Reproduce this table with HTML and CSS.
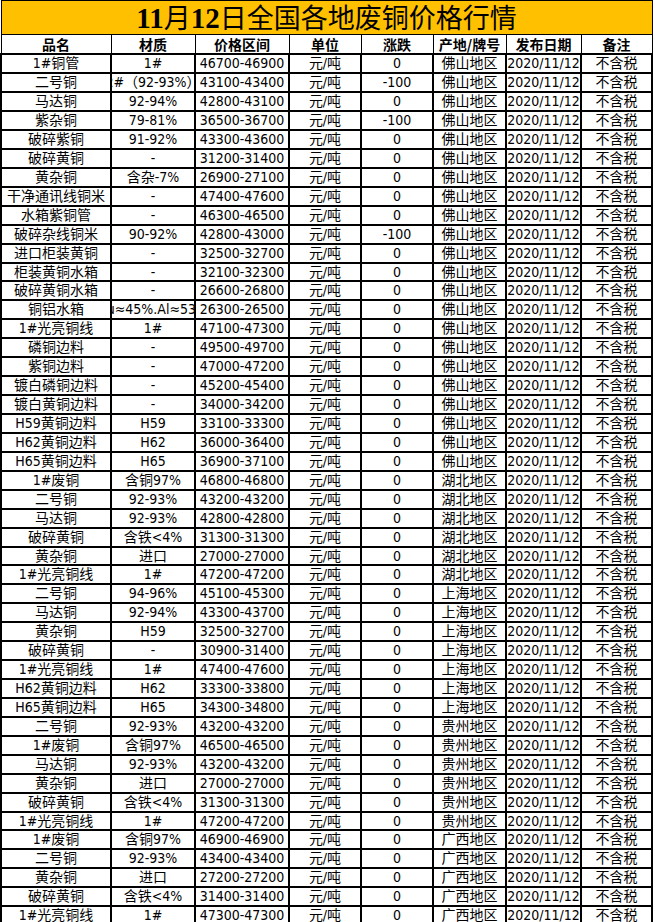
FILE: index.html
```html
<!DOCTYPE html>
<html lang="zh-CN">
<head>
<meta charset="utf-8">
<title>11月12日全国各地废铜价格行情</title>
<link rel="stylesheet" href="styles.css">
</head>
<body>
<table class="price-table">
  <colgroup>
    <col class="c-name"><col class="c-mat"><col class="c-range"><col class="c-unit">
    <col class="c-chg"><col class="c-area"><col class="c-date"><col class="c-note">
  </colgroup>
  <thead>
    <tr class="title-row"><th colspan="8"><span class="num">11</span>月<span class="num">12</span>日全国各地废铜价格行情</th></tr>
    <tr class="head-row"><th>品名</th><th>材质</th><th>价格区间</th><th>单位</th><th>涨跌</th><th>产地/牌号</th><th>发布日期</th><th>备注</th></tr>
  </thead>
  <tbody>
    <tr><td>1#铜管</td><td>1#</td><td>46700-46900</td><td>元/吨</td><td>0</td><td>佛山地区</td><td>2020/11/12</td><td>不含税</td></tr>
    <tr><td>二号铜</td><td><div class="clip"><span>2#（92-93%）</span></div></td><td>43100-43400</td><td>元/吨</td><td>-100</td><td>佛山地区</td><td>2020/11/12</td><td>不含税</td></tr>
    <tr><td>马达铜</td><td>92-94%</td><td>42800-43100</td><td>元/吨</td><td>0</td><td>佛山地区</td><td>2020/11/12</td><td>不含税</td></tr>
    <tr><td>紫杂铜</td><td>79-81%</td><td>36500-36700</td><td>元/吨</td><td>-100</td><td>佛山地区</td><td>2020/11/12</td><td>不含税</td></tr>
    <tr><td>破碎紫铜</td><td>91-92%</td><td>43300-43600</td><td>元/吨</td><td>0</td><td>佛山地区</td><td>2020/11/12</td><td>不含税</td></tr>
    <tr><td>破碎黄铜</td><td>-</td><td>31200-31400</td><td>元/吨</td><td>0</td><td>佛山地区</td><td>2020/11/12</td><td>不含税</td></tr>
    <tr><td>黄杂铜</td><td>含杂-7%</td><td>26900-27100</td><td>元/吨</td><td>0</td><td>佛山地区</td><td>2020/11/12</td><td>不含税</td></tr>
    <tr><td>干净通讯线铜米</td><td>-</td><td>47400-47600</td><td>元/吨</td><td>0</td><td>佛山地区</td><td>2020/11/12</td><td>不含税</td></tr>
    <tr><td>水箱紫铜管</td><td>-</td><td>46300-46500</td><td>元/吨</td><td>0</td><td>佛山地区</td><td>2020/11/12</td><td>不含税</td></tr>
    <tr><td>破碎杂线铜米</td><td>90-92%</td><td>42800-43000</td><td>元/吨</td><td>-100</td><td>佛山地区</td><td>2020/11/12</td><td>不含税</td></tr>
    <tr><td>进口柜装黄铜</td><td>-</td><td>32500-32700</td><td>元/吨</td><td>0</td><td>佛山地区</td><td>2020/11/12</td><td>不含税</td></tr>
    <tr class="tight"><td>柜装黄铜水箱</td><td>-</td><td>32100-32300</td><td>元/吨</td><td>0</td><td>佛山地区</td><td>2020/11/12</td><td>不含税</td></tr>
    <tr><td>破碎黄铜水箱</td><td>-</td><td>26600-26800</td><td>元/吨</td><td>0</td><td>佛山地区</td><td>2020/11/12</td><td>不含税</td></tr>
    <tr><td>铜铝水箱</td><td><div class="clip"><span>Cu≈45%.Al≈53%</span></div></td><td>26300-26500</td><td>元/吨</td><td>0</td><td>佛山地区</td><td>2020/11/12</td><td>不含税</td></tr>
    <tr><td>1#光亮铜线</td><td>1#</td><td>47100-47300</td><td>元/吨</td><td>0</td><td>佛山地区</td><td>2020/11/12</td><td>不含税</td></tr>
    <tr><td>磷铜边料</td><td>-</td><td>49500-49700</td><td>元/吨</td><td>0</td><td>佛山地区</td><td>2020/11/12</td><td>不含税</td></tr>
    <tr><td>紫铜边料</td><td>-</td><td>47000-47200</td><td>元/吨</td><td>0</td><td>佛山地区</td><td>2020/11/12</td><td>不含税</td></tr>
    <tr><td>镀白磷铜边料</td><td>-</td><td>45200-45400</td><td>元/吨</td><td>0</td><td>佛山地区</td><td>2020/11/12</td><td>不含税</td></tr>
    <tr><td>镀白黄铜边料</td><td>-</td><td>34000-34200</td><td>元/吨</td><td>0</td><td>佛山地区</td><td>2020/11/12</td><td>不含税</td></tr>
    <tr><td>H59黄铜边料</td><td>H59</td><td>33100-33300</td><td>元/吨</td><td>0</td><td>佛山地区</td><td>2020/11/12</td><td>不含税</td></tr>
    <tr><td>H62黄铜边料</td><td>H62</td><td>36000-36400</td><td>元/吨</td><td>0</td><td>佛山地区</td><td>2020/11/12</td><td>不含税</td></tr>
    <tr><td>H65黄铜边料</td><td>H65</td><td>36900-37100</td><td>元/吨</td><td>0</td><td>佛山地区</td><td>2020/11/12</td><td>不含税</td></tr>
    <tr><td>1#废铜</td><td>含铜97%</td><td>46800-46800</td><td>元/吨</td><td>0</td><td>湖北地区</td><td>2020/11/12</td><td>不含税</td></tr>
    <tr><td>二号铜</td><td>92-93%</td><td>43200-43200</td><td>元/吨</td><td>0</td><td>湖北地区</td><td>2020/11/12</td><td>不含税</td></tr>
    <tr><td>马达铜</td><td>92-93%</td><td>42800-42800</td><td>元/吨</td><td>0</td><td>湖北地区</td><td>2020/11/12</td><td>不含税</td></tr>
    <tr><td>破碎黄铜</td><td>含铁&lt;4%</td><td>31300-31300</td><td>元/吨</td><td>0</td><td>湖北地区</td><td>2020/11/12</td><td>不含税</td></tr>
    <tr class="tight"><td>黄杂铜</td><td>进口</td><td>27000-27000</td><td>元/吨</td><td>0</td><td>湖北地区</td><td>2020/11/12</td><td>不含税</td></tr>
    <tr><td>1#光亮铜线</td><td>1#</td><td>47200-47200</td><td>元/吨</td><td>0</td><td>湖北地区</td><td>2020/11/12</td><td>不含税</td></tr>
    <tr><td>二号铜</td><td>94-96%</td><td>45100-45300</td><td>元/吨</td><td>0</td><td>上海地区</td><td>2020/11/12</td><td>不含税</td></tr>
    <tr><td>马达铜</td><td>92-94%</td><td>43300-43700</td><td>元/吨</td><td>0</td><td>上海地区</td><td>2020/11/12</td><td>不含税</td></tr>
    <tr><td>黄杂铜</td><td>H59</td><td>32500-32700</td><td>元/吨</td><td>0</td><td>上海地区</td><td>2020/11/12</td><td>不含税</td></tr>
    <tr><td>破碎黄铜</td><td>-</td><td>30900-31400</td><td>元/吨</td><td>0</td><td>上海地区</td><td>2020/11/12</td><td>不含税</td></tr>
    <tr><td>1#光亮铜线</td><td>1#</td><td>47400-47600</td><td>元/吨</td><td>0</td><td>上海地区</td><td>2020/11/12</td><td>不含税</td></tr>
    <tr><td>H62黄铜边料</td><td>H62</td><td>33300-33800</td><td>元/吨</td><td>0</td><td>上海地区</td><td>2020/11/12</td><td>不含税</td></tr>
    <tr><td>H65黄铜边料</td><td>H65</td><td>34300-34800</td><td>元/吨</td><td>0</td><td>上海地区</td><td>2020/11/12</td><td>不含税</td></tr>
    <tr><td>二号铜</td><td>92-93%</td><td>43200-43200</td><td>元/吨</td><td>0</td><td>贵州地区</td><td>2020/11/12</td><td>不含税</td></tr>
    <tr><td>1#废铜</td><td>含铜97%</td><td>46500-46500</td><td>元/吨</td><td>0</td><td>贵州地区</td><td>2020/11/12</td><td>不含税</td></tr>
    <tr><td>马达铜</td><td>92-93%</td><td>43200-43200</td><td>元/吨</td><td>0</td><td>贵州地区</td><td>2020/11/12</td><td>不含税</td></tr>
    <tr><td>黄杂铜</td><td>进口</td><td>27000-27000</td><td>元/吨</td><td>0</td><td>贵州地区</td><td>2020/11/12</td><td>不含税</td></tr>
    <tr><td>破碎黄铜</td><td>含铁&lt;4%</td><td>31300-31300</td><td>元/吨</td><td>0</td><td>贵州地区</td><td>2020/11/12</td><td>不含税</td></tr>
    <tr class="tight"><td>1#光亮铜线</td><td>1#</td><td>47200-47200</td><td>元/吨</td><td>0</td><td>贵州地区</td><td>2020/11/12</td><td>不含税</td></tr>
    <tr><td>1#废铜</td><td>含铜97%</td><td>46900-46900</td><td>元/吨</td><td>0</td><td>广西地区</td><td>2020/11/12</td><td>不含税</td></tr>
    <tr><td>二号铜</td><td>92-93%</td><td>43400-43400</td><td>元/吨</td><td>0</td><td>广西地区</td><td>2020/11/12</td><td>不含税</td></tr>
    <tr><td>黄杂铜</td><td>进口</td><td>27200-27200</td><td>元/吨</td><td>0</td><td>广西地区</td><td>2020/11/12</td><td>不含税</td></tr>
    <tr><td>破碎黄铜</td><td>含铁&lt;4%</td><td>31400-31400</td><td>元/吨</td><td>0</td><td>广西地区</td><td>2020/11/12</td><td>不含税</td></tr>
    <tr><td>1#光亮铜线</td><td>1#</td><td>47300-47300</td><td>元/吨</td><td>0</td><td>广西地区</td><td>2020/11/12</td><td>不含税</td></tr>
  </tbody>
</table>
</body>
</html>
```

FILE: styles.css
```css
html, body {
  margin: 0;
  padding: 0;
  background: #ffffff;
}

.price-table {
  border-collapse: collapse;
  table-layout: fixed;
  width: 651px;
  color: #000;
}

.c-name { width: 110px; }
.c-mat { width: 84px; }
.c-range { width: 94px; }
.c-unit { width: 72px; }
.c-chg { width: 72px; }
.c-area { width: 73px; }
.c-date { width: 75px; }
.c-note { width: 71px; }

.title-row th {
  height: 31px;
  padding: 0;
  background: #ffc000;
  border: 1px solid #000;
  font-family: "Noto Sans CJK SC", sans-serif;
  font-weight: 400;
  font-size: 27px;
  line-height: 31px;
  text-align: center;
}

.title-row .num {
  font-family: "Liberation Serif", serif;
  font-weight: 700;
  font-size: 29px;
}

.head-row th {
  height: 18px;
  padding: 0;
  border: 1px solid #000;
  font-family: "Noto Sans CJK SC", sans-serif;
  font-weight: 700;
  font-size: 14px;
  line-height: 18px;
  text-align: center;
  white-space: nowrap;
  overflow: hidden;
}

tbody td {
  height: 17px;
  padding: 0;
  border: 2px solid #000;
  font-family: "DejaVu Sans Condensed", "DejaVu Sans", "Noto Sans CJK SC", sans-serif;
  font-stretch: condensed;
  font-size: 14px;
  line-height: 17px;
  text-align: center;
  white-space: nowrap;
  overflow: hidden;
  vertical-align: bottom;
}

tbody .tight td {
  height: 16px;
  line-height: 16px;
}

.clip {
  display: flex;
  justify-content: center;
  overflow: hidden;
  white-space: nowrap;
}

.clip span {
  flex: none;
}
```
